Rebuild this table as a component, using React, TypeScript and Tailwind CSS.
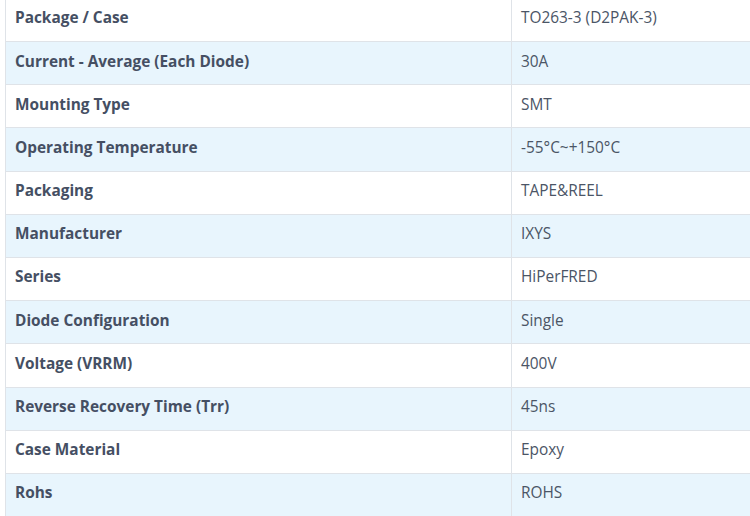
import React from "react";

const rows: [string, string][] = [
  ["Package / Case", "TO263-3 (D2PAK-3)"],
  ["Current - Average (Each Diode)", "30A"],
  ["Mounting Type", "SMT"],
  ["Operating Temperature", "-55°C~+150°C"],
  ["Packaging", "TAPE&REEL"],
  ["Manufacturer", "IXYS"],
  ["Series", "HiPerFRED"],
  ["Diode Configuration", "Single"],
  ["Voltage (VRRM)", "400V"],
  ["Reverse Recovery Time (Trr)", "45ns"],
  ["Case Material", "Epoxy"],
  ["Rohs", "ROHS"],
];

export default function App() {
  return (
    <div
      className="w-[750px] h-[516px] overflow-hidden bg-white pl-[5px]"
      style={{ fontFamily: '"Open Sans", sans-serif' }}
    >
      <div className="mt-[-1.2px] w-[800px] border-l border-[#dfe3e8] flex flex-col">
        {rows.map(([k, v], i) => (
          <div
            key={k}
            className={`flex shrink-0 h-[43.2px] border-b border-[#dfe3e8] ${i % 2 === 1 ? "bg-[#e8f5fd]" : "bg-white"}`}
          >
            <div className="w-[506px] shrink-0 border-r border-[#dfe3e8] flex items-center pl-[9px] pb-[4px] text-[15.4px] font-bold text-[#454f63]">
              {k}
            </div>
            <div className="flex-1 flex items-center pl-[9px] pb-[4px] text-[15.4px] text-[#4b5566]">
              {v}
            </div>
          </div>
        ))}
      </div>
    </div>
  );
}
